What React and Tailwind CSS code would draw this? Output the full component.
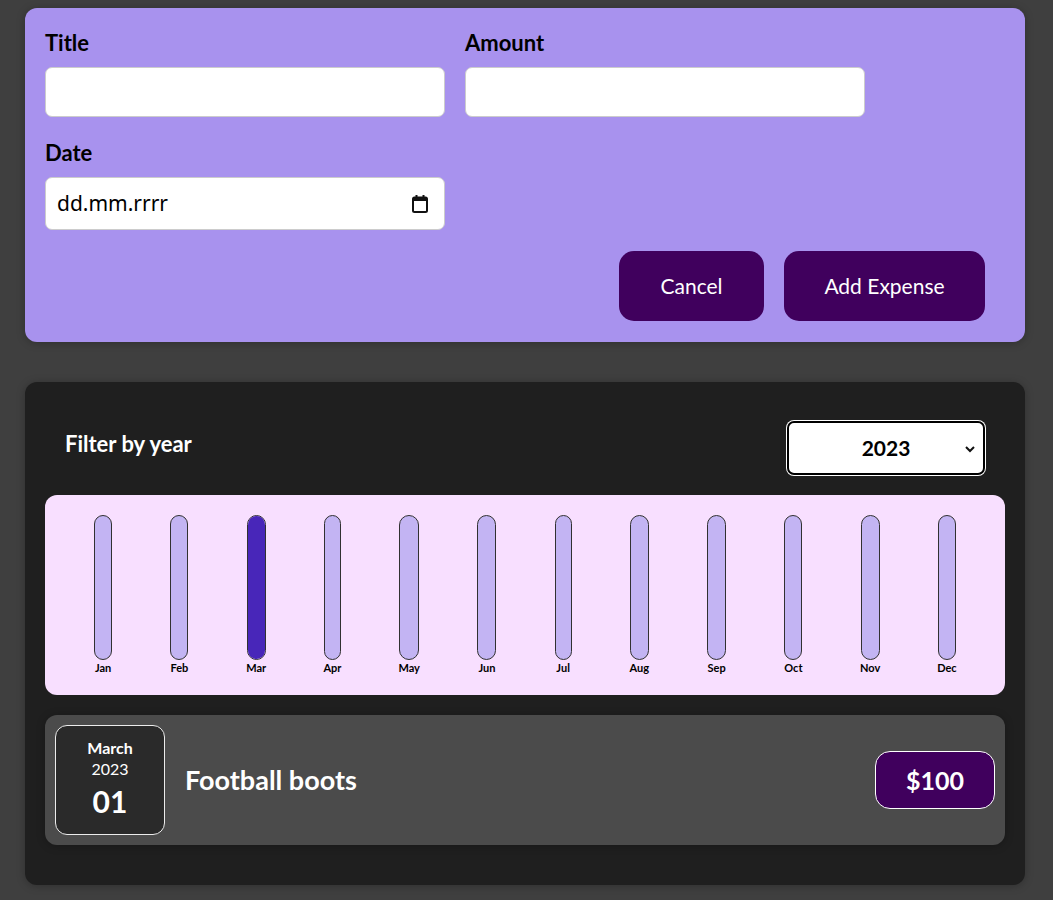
import React from "react";

const MONTHS = [
  { label: "Jan", w: 18, fill: 0 },
  { label: "Feb", w: 18, fill: 0 },
  { label: "Mar", w: 19, fill: 100 },
  { label: "Apr", w: 17, fill: 0 },
  { label: "May", w: 20, fill: 0 },
  { label: "Jun", w: 19, fill: 0 },
  { label: "Jul", w: 17, fill: 0 },
  { label: "Aug", w: 19, fill: 0 },
  { label: "Sep", w: 19, fill: 0 },
  { label: "Oct", w: 18, fill: 0 },
  { label: "Nov", w: 19, fill: 0 },
  { label: "Dec", w: 18, fill: 0 },
];

const CalendarIcon = () => (
  <svg width="18" height="20" viewBox="0 0 18 20" fill="none">
    <rect x="2" y="3.5" width="14" height="14.5" rx="1.5" stroke="#111" strokeWidth="2" />
    <rect x="2" y="3.5" width="14" height="3.5" fill="#111" />
    <rect x="4.5" y="1" width="2" height="3" fill="#111" />
    <rect x="11.5" y="1" width="2" height="3" fill="#111" />
  </svg>
);

const Chevron = () => (
  <svg width="12" height="8" viewBox="0 0 12 8" fill="none">
    <path d="M2 2l4 4 4-4" stroke="#111" strokeWidth="2" />
  </svg>
);

const Field = ({ label, children }) => (
  <div className="w-[400px]">
    <label className="block font-bold text-[22px] leading-[29px] mb-[10px] text-black">
      {label}
    </label>
    {children}
  </div>
);

const App = () => {
  return (
    <div
      className="min-h-[900px] bg-[#3f3f3f] pt-[8px] pb-[16px]"
      style={{ fontFamily: "Lato, 'Noto Sans', sans-serif" }}
    >
      {/* New expense form */}
      <div className="ml-[25px] w-[1000px] bg-[#a892ee] rounded-[12px] pt-[20px] px-[20px] pb-[21px] shadow-[0_1px_8px_rgba(0,0,0,0.25)]">
        <div className="flex flex-wrap gap-x-[20px] gap-y-[21px] mb-[21px]">
          <Field label="Title">
            <div className="h-[50px] bg-white rounded-[7px] border border-[#ccc]" />
          </Field>
          <Field label="Amount">
            <div className="h-[50px] bg-white rounded-[7px] border border-[#ccc]" />
          </Field>
          <Field label="Date">
            <div className="h-[53px] bg-white rounded-[7px] border border-[#ccc] flex items-center justify-between pl-[11px] pr-[15px]">
              <span
                className="text-[21px] text-black"
                style={{ fontFamily: "'Noto Sans', sans-serif" }}
              >
                dd.mm.rrrr
              </span>
              <CalendarIcon />
            </div>
          </Field>
        </div>
        <div className="flex justify-end gap-[20px] pr-[20px]">
          <button className="h-[70px] w-[145px] bg-[#40005d] text-white text-[21px] rounded-[15px]">
            Cancel
          </button>
          <button className="h-[70px] w-[201px] bg-[#40005d] text-white text-[21px] rounded-[15px]">
            Add Expense
          </button>
        </div>
      </div>

      {/* Expenses list */}
      <div className="ml-[25px] mt-[40px] w-[1000px] bg-[#1f1f1f] rounded-[12px] p-[20px] shadow-[0_1px_8px_rgba(0,0,0,0.25)]">
        <div className="px-[20px] mt-[19px] mb-[20px] flex items-center justify-between text-white">
          <span className="font-bold text-[22px] mb-[10px]">Filter by year</span>
          <div className="w-[198px] h-[54px] bg-white rounded-[7px] border-2 border-black ring-1 ring-white flex items-center justify-center relative">
            <span className="font-bold text-[21px] text-black">2023</span>
            <span className="absolute right-[7px] top-[22px]">
              <Chevron />
            </span>
          </div>
        </div>

        <div className="h-[200px] bg-[#f8dfff] rounded-[12px] p-[20px] flex justify-around">
          {MONTHS.map((m) => (
            <div key={m.label} className="h-full flex flex-col items-center" style={{ width: m.w }}>
              <div className="flex-1 w-full border border-[#313131] rounded-[12px] bg-[#c3b4f3] overflow-hidden flex flex-col justify-end">
                <div className="w-full bg-[#4826b9]" style={{ height: `${m.fill}%` }} />
              </div>
              <div className="font-bold text-[11px] leading-[15px] text-black text-center whitespace-nowrap">
                {m.label}
              </div>
            </div>
          ))}
        </div>

        <div className="my-[20px] bg-[#4b4b4b] rounded-[12px] p-[10px] flex items-center shadow-[0_1px_8px_rgba(0,0,0,0.25)]">
          <div className="w-[110px] h-[110px] border border-[#ececec] bg-[#2a2a2a] rounded-[12px] flex flex-col items-center justify-center text-white">
            <div className="font-bold text-[16px] leading-[21px]">March</div>
            <div className="text-[16px] leading-[21px]">2023</div>
            <div className="font-bold text-[30px] leading-[44px]">01</div>
          </div>
          <div className="flex-1 flex items-center">
            <h2 className="flex-1 mx-[20px] text-white font-bold text-[27px]">Football boots</h2>
            <div className="bg-[#40005d] border border-white rounded-[15px] px-[30px] py-[10px] text-white font-bold text-[25px] leading-[36px]">
              $100
            </div>
          </div>
        </div>
      </div>
    </div>
  );
};

export default App;
